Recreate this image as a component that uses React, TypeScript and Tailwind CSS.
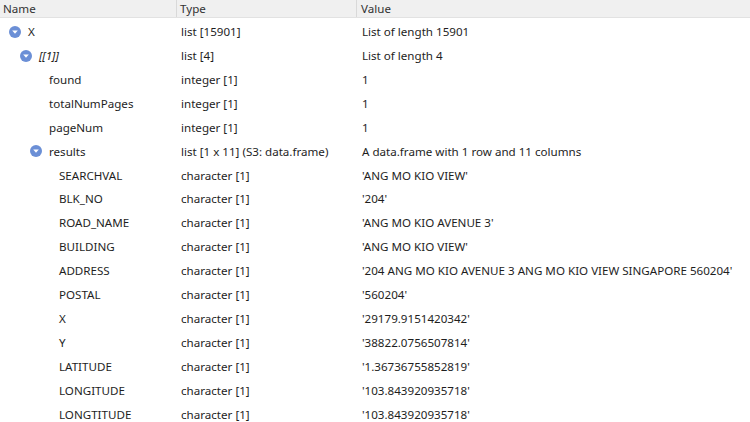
import React from 'react';

type Row = {
  name: string;
  type: string;
  value: string;
  level: number;
  expandable?: boolean;
  italic?: boolean;
};

const ROWS: Row[] = [
  { name: 'X', type: 'list [15901]', value: 'List of length 15901', level: 0, expandable: true },
  { name: '[[1]]', type: 'list [4]', value: 'List of length 4', level: 1, expandable: true, italic: true },
  { name: 'found', type: 'integer [1]', value: '1', level: 2 },
  { name: 'totalNumPages', type: 'integer [1]', value: '1', level: 2 },
  { name: 'pageNum', type: 'integer [1]', value: '1', level: 2 },
  { name: 'results', type: 'list [1 x 11] (S3: data.frame)', value: 'A data.frame with 1 row and 11 columns', level: 2, expandable: true },
  { name: 'SEARCHVAL', type: 'character [1]', value: "'ANG MO KIO VIEW'", level: 3 },
  { name: 'BLK_NO', type: 'character [1]', value: "'204'", level: 3 },
  { name: 'ROAD_NAME', type: 'character [1]', value: "'ANG MO KIO AVENUE 3'", level: 3 },
  { name: 'BUILDING', type: 'character [1]', value: "'ANG MO KIO VIEW'", level: 3 },
  { name: 'ADDRESS', type: 'character [1]', value: "'204 ANG MO KIO AVENUE 3 ANG MO KIO VIEW SINGAPORE 560204'", level: 3 },
  { name: 'POSTAL', type: 'character [1]', value: "'560204'", level: 3 },
  { name: 'X', type: 'character [1]', value: "'29179.9151420342'", level: 3 },
  { name: 'Y', type: 'character [1]', value: "'38822.0756507814'", level: 3 },
  { name: 'LATITUDE', type: 'character [1]', value: "'1.36736755852819'", level: 3 },
  { name: 'LONGITUDE', type: 'character [1]', value: "'103.843920935718'", level: 3 },
  { name: 'LONGTITUDE', type: 'character [1]', value: "'103.843920935718'", level: 3 },
];

const INDENT = [28, 39, 49, 59];

const Toggle = () => (
  <svg width="12" height="12" viewBox="0 0 12 12" className="shrink-0">
    <circle cx="6" cy="6" r="6" fill="#6b8fd6" />
    <path d="M3.2 4.6 L8.8 4.6 L6 7.8 Z" fill="#ffffff" />
  </svg>
);

export default function App() {
  return (
    <div
      className="w-[750px] h-[422px] overflow-hidden bg-white text-[11.6px] text-[#1e1e1e]"
      style={{ fontFamily: '"Noto Sans", "Open Sans", sans-serif' }}
    >
      {/* Header */}
      <div className="flex h-[18px] bg-[#f0f0f0] border-b border-[#e2e2e2] text-[#333] leading-[17px]">
        <div className="w-[177px] pl-[3px] border-r border-[#d9d9d9]">Name</div>
        <div className="w-[180px] pl-[3px] border-r border-[#d9d9d9]">Type</div>
        <div className="flex-1 pl-[4px]">Value</div>
      </div>

      <div className="pt-[2px]">
        {ROWS.map((r, i) => (
          <div key={i} className="flex h-[23.9px] items-center whitespace-nowrap">
            <div className="w-[177px] relative h-full flex items-center">
              {r.expandable && (
                <span className="absolute top-[6px]" style={{ left: INDENT[r.level] - 19 }}>
                  <Toggle />
                </span>
              )}
              <span className={r.italic ? 'italic' : ''} style={{ paddingLeft: INDENT[r.level] }}>
                {r.name}
              </span>
            </div>
            <div className="w-[180px] pl-[4px]">{r.type}</div>
            <div className="flex-1 pl-[5px]">{r.value}</div>
          </div>
        ))}
      </div>
    </div>
  );
}
